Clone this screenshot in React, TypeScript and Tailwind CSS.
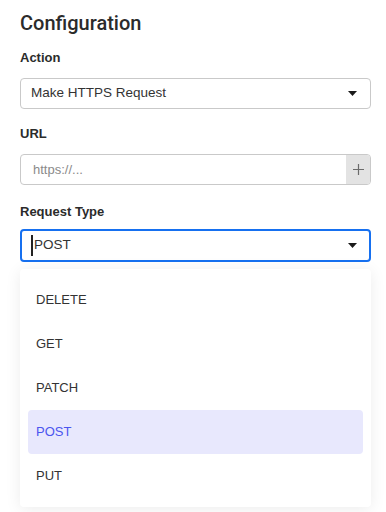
import React from 'react';

const METHODS = ['DELETE', 'GET', 'PATCH', 'POST', 'PUT'];

function Caret() {
  return (
    <svg width="9" height="5" viewBox="0 0 9 5" className="shrink-0">
      <path d="M0 0 H9 L4.5 5 Z" fill="#1a1a1a" />
    </svg>
  );
}

export default function App() {
  const selected = 'POST';

  return (
    <div
      className="min-h-[512px] bg-white pl-5 pr-[15px] pt-[9px] text-[#333]"
      style={{ fontFamily: '"Liberation Sans", Arial, sans-serif' }}
    >
      <h2
        className="text-[20px] leading-[28px] font-medium text-[#2b2b2b]"
        style={{ fontFamily: 'Roboto, "Liberation Sans", sans-serif' }}
      >
        Configuration
      </h2>

      <div className="mt-[11px] text-[13px] leading-[20px] font-bold text-[#2b2b2b]">Action</div>
      <div className="mt-[10px] flex h-[31px] items-center justify-between rounded-[4px] border border-[#c9c9c9] pl-[10px] pr-[13px] text-[13.5px]">
        <span>Make HTTPS Request</span>
        <Caret />
      </div>

      <div className="mt-[15px] text-[13px] leading-[20px] font-bold text-[#2b2b2b]">URL</div>
      <div className="mt-[10px] flex h-[31px] overflow-hidden rounded-[4px] border border-[#c9c9c9] text-[13px]">
        <div className="flex flex-1 items-center pl-[12px] text-[#8a8a8a]">https://...</div>
        <div className="flex w-[24px] items-center justify-center bg-[#e3e3e3]">
          <svg width="11" height="11" viewBox="0 0 11 11">
            <path d="M5.5 0 V11 M0 5.5 H11" stroke="#6b6b6b" strokeWidth="1.2" />
          </svg>
        </div>
      </div>

      <div className="mt-[17px] text-[13px] leading-[20px] font-bold text-[#2b2b2b]">Request Type</div>
      <div className="mt-[7px] flex h-[33px] items-center justify-between rounded-[4px] border-2 border-[#1670f0] pl-[9px] pr-[12px] text-[13.5px]">
        <span className="flex items-center">
          <span className="mr-px inline-block h-[21px] w-[2px] bg-[#222]" />
          POST
        </span>
        <Caret />
      </div>

      <div className="mt-[7px] rounded-[4px] bg-white px-2 py-[9px] shadow-[0_2px_16px_rgba(0,0,0,0.08)]">
        {METHODS.map((m) => (
          <div
            key={m}
            className={`flex h-[44px] items-center rounded-[4px] px-2 text-[13px] ${
              m === selected ? 'bg-[#e8e8fd] text-[#4b55ef]' : 'text-[#333]'
            }`}
          >
            {m}
          </div>
        ))}
      </div>
    </div>
  );
}
